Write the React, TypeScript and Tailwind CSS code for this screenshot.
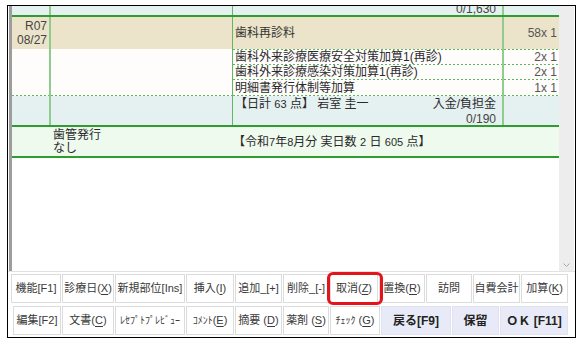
import type { ReactNode } from "react";

const dotted =
  "h-px shrink-0 bg-[image:repeating-linear-gradient(90deg,#5eb65e_0_2px,transparent_2px_4px)]";

function U({ children }: { children: ReactNode }) {
  return <span className="underline underline-offset-2">{children}</span>;
}

function Cells({
  c0,
  c1,
  c2,
  c3,
}: {
  c0?: ReactNode;
  c1?: ReactNode;
  c2?: ReactNode;
  c3?: ReactNode;
}) {
  return (
    <>
      <div className="w-[37px] shrink-0 flex flex-col">{c0}</div>
      <div className="w-[183px] shrink-0 flex flex-col border-l-2 border-[#8fcd8f]">
        {c1}
      </div>
      <div className="w-[270px] shrink-0 flex flex-col border-l border-[#62b862]">
        {c2}
      </div>
      <div className="w-[57px] shrink-0 flex flex-col border-l-2 border-[#8fcd8f]">
        {c3}
      </div>
    </>
  );
}

function SubLines({ items }: { items: ReactNode[] }) {
  return (
    <>
      {items.map((item, i) => (
        <div key={i} className="flex flex-col">
          <div className={dotted} />
          <div
            className={`flex items-center ${i === items.length - 1 ? "h-[15px]" : "h-[14px]"}`}
          >
            {item}
          </div>
        </div>
      ))}
      <div className={dotted} />
    </>
  );
}

const greenLine = <div className="h-[2px] shrink-0 bg-[#2e9c2e]" />;

function Btn({
  w,
  children,
  strong,
}: {
  w: string;
  children?: ReactNode;
  strong?: boolean;
}) {
  return (
    <div
      className={`${w} h-full shrink-0 flex items-center justify-center border whitespace-nowrap ${
        strong
          ? "bg-[#e8ebf7] border-[#dfe3f1] text-[12px] font-bold text-[#222]"
          : "bg-white border-[#dcdcdc] text-[11px] text-[#3a3a3a]"
      }`}
    >
      {children}
    </div>
  );
}

export default function App() {
  return (
    <div className="relative w-[583px] h-[347px] bg-white pl-[7px] pt-[5px] font-['Liberation_Sans','Noto_Sans_CJK_JP',sans-serif] text-[12px] text-[#2a2a2a]">
      <div className="w-[569px] h-[333px] border border-black flex flex-col">
        {/* list panel */}
        <div className="h-[265px] flex shrink-0">
          <div className="w-px shrink-0" />
          <div className="w-[3px] shrink-0 bg-[#9d9d9d]" />
          <div className="w-[547px] shrink-0 flex flex-col">
            <div className="h-[9px] shrink-0 flex bg-[#e5f0f0] overflow-hidden">
              <Cells
                c2={
                  <div className="-mt-[4px] leading-[14px] text-right pr-[6px] text-[#444]">
                    0/1,630
                  </div>
                }
              />
            </div>
            {greenLine}
            <div className="h-[32px] shrink-0 flex bg-[#ece4ca]">
              <Cells
                c0={
                  <div className="flex flex-col items-end pr-[2px] pt-[2px] leading-[14px] text-[#444]">
                    <span>R07</span>
                    <span>08/27</span>
                  </div>
                }
                c2={
                  <div className="h-full flex items-center pl-[2px] text-[#333]">
                    歯科再診料
                  </div>
                }
                c3={
                  <div className="h-full flex items-center justify-end pr-[2px] text-[#555]">
                    58x 1
                  </div>
                }
              />
            </div>
            <div className="h-[47px] shrink-0 flex bg-[#fffcfc]">
              <Cells
                c0={
                  <>
                    <div className="flex-1" />
                    <div className={dotted} />
                  </>
                }
                c1={
                  <>
                    <div className="flex-1" />
                    <div className={dotted} />
                  </>
                }
                c2={
                  <SubLines
                    items={[
                      <span className="pl-[2px]">歯科外来診療医療安全対策加算1(再診)</span>,
                      <span className="pl-[2px]">歯科外来診療感染対策加算1(再診)</span>,
                      <span className="pl-[2px]">明細書発行体制等加算</span>,
                    ]}
                  />
                }
                c3={
                  <SubLines
                    items={[
                      <span className="ml-auto pr-[2px] text-[#555]">2x 1</span>,
                      <span className="ml-auto pr-[2px] text-[#555]">2x 1</span>,
                      <span className="ml-auto pr-[2px] text-[#555]">1x 1</span>,
                    ]}
                  />
                }
              />
            </div>
            <div className="h-[29px] shrink-0 flex bg-[#e5f0f0]">
              <Cells
                c2={
                  <div className="flex flex-col leading-[15px] pt-[1px] pl-[2px] pr-[6px]">
                    <div className="flex justify-between">
                      <span>
                        【日計 <span className="text-[11px]">63</span> 点】 岩室 圭一
                      </span>
                      <span>入金/負担金</span>
                    </div>
                    <div className="text-right text-[#444]">0/190</div>
                  </div>
                }
              />
            </div>
            {greenLine}
            <div className="h-[29px] shrink-0 flex items-center bg-[#eefaee]">
              <div className="w-[221px] shrink-0 pl-[41px] leading-[13px]">
                <div>歯管発行</div>
                <div>なし</div>
              </div>
              <div>
                【令和<span className="text-[11px]">7</span>年<span className="text-[11px]">8</span>月分 実日数{" "}
                <span className="text-[11px]">2</span> 日 <span className="text-[11px]">605</span> 点】
              </div>
            </div>
            {greenLine}
            <div className="flex-1 bg-white" />
          </div>
          <div className="w-[15px] shrink-0 bg-[#ededed] flex flex-col justify-end items-center pb-[4px]">
            <svg width="7" height="4" viewBox="0 0 7 4">
              <path d="M0.5 0.5 L3.5 3.5 L6.5 0.5" fill="none" stroke="#a8a8a8" strokeWidth="1" />
            </svg>
          </div>
          <div className="w-px shrink-0" />
        </div>

        {/* button bar */}
        <div className="h-[66px] shrink-0 border-t border-[#e2e2e2] pl-[3px] pt-[2px] flex flex-col gap-[3px]">
          <div className="h-[29px] flex gap-px">
            <Btn w="w-[50px]">機能[F1]</Btn>
            <Btn w="w-[52px]">
              診療日(<U>X</U>)
            </Btn>
            <Btn w="w-[70px]">新規部位[Ins]</Btn>
            <Btn w="w-[48px]">
              挿入(<U>I</U>)
            </Btn>
            <Btn w="w-[47px]">追加_[+]</Btn>
            <Btn w="w-[46px]">削除_[-]</Btn>
            <Btn w="w-[48px]">
              取消(<U>Z</U>)
            </Btn>
            <Btn w="w-[46px]">
              置換(<U>R</U>)
            </Btn>
            <Btn w="w-[46px]">訪問</Btn>
            <Btn w="w-[47px]">自費会計</Btn>
            <Btn w="w-[47px]">
              加算(<U>K</U>)
            </Btn>
          </div>
          <div className="h-[29px] flex gap-px ml-[2px]">
            <Btn w="w-[48px]">編集[F2]</Btn>
            <Btn w="w-[52px]">
              文書(<U>C</U>)
            </Btn>
            <Btn w="w-[70px]">
              <span className="text-[10px]">ﾚｾﾌﾟﾄﾌﾟﾚﾋﾞｭｰ</span>
            </Btn>
            <Btn w="w-[48px]">
              <span className="text-[10px]">ｺﾒﾝﾄ</span>(<U>E</U>)
            </Btn>
            <Btn w="w-[47px]">
              摘要 (<U>D</U>)
            </Btn>
            <Btn w="w-[46px]">
              薬剤 (<U>S</U>)
            </Btn>
            <Btn w="w-[50px]">
              <span className="text-[10px]">ﾁｪｯｸ</span>&nbsp;(<U>G</U>)
            </Btn>
            <Btn w="w-[70px]" strong>
              戻る[F9]
            </Btn>
            <Btn w="w-[47px]" strong>
              保留
            </Btn>
            <Btn w="w-[68px]" strong>
              ＯＫ [F11]
            </Btn>
          </div>
        </div>
      </div>

      {/* highlight around 取消 */}
      <div className="absolute left-[327px] top-[272px] w-[56px] h-[33px] border-[3px] border-[#e3141b] rounded-[6px]" />
    </div>
  );
}
